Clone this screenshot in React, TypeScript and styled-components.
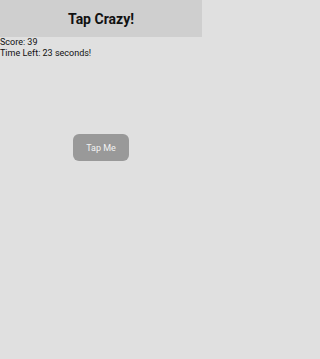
import styled, { createGlobalStyle } from "styled-components";

const Global = createGlobalStyle`
  html, body, #root {
    margin: 0;
    padding: 0;
    height: 100%;
  }
  body {
    font-family: Roboto, "Liberation Sans", sans-serif;
    background: #e0e0e0;
  }
`;

const Screen = styled.div`
  display: flex;
  flex-direction: column;
  width: 202px;
  height: 100%;
  background: #e0e0e0;
`;

const Header = styled.header`
  height: 37px;
  display: flex;
  align-items: center;
  justify-content: center;
  background: #cfcfcf;
`;

const Title = styled.h1`
  margin: 0;
  font-size: 14px;
  font-weight: 700;
  color: #111;
`;

const Stats = styled.div`
  font-size: 9px;
  line-height: 11px;
  color: #111;
`;

const Board = styled.div`
  display: flex;
  justify-content: center;
  padding-top: 75px;
`;

const TapButton = styled.button`
  width: 56px;
  height: 27px;
  border: none;
  border-radius: 6px;
  background: #999999;
  color: #f2f2f2;
  font-family: Roboto, "Liberation Sans", sans-serif;
  font-size: 9px;
  padding: 0;
`;

export default function App() {
  return (
    <Screen>
      <Global />
      <Header>
        <Title>Tap Crazy!</Title>
      </Header>
      <Stats>
        <div>Score: 39</div>
        <div>Time Left: 23 seconds!</div>
      </Stats>
      <Board>
        <TapButton>Tap Me</TapButton>
      </Board>
    </Screen>
  );
}
